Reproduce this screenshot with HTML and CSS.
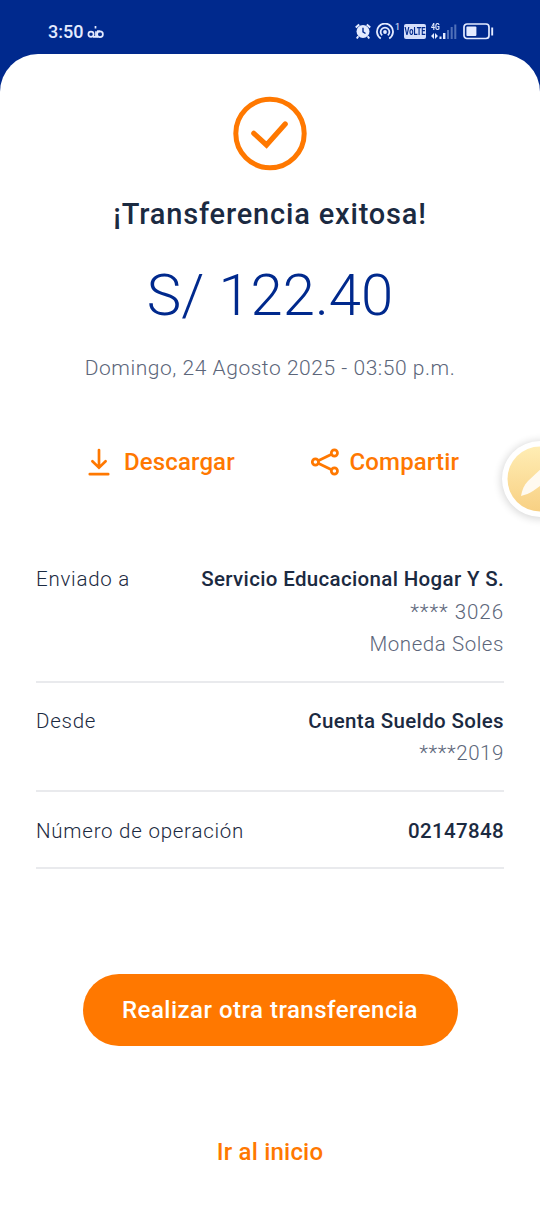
FILE: index.html
```html
<!DOCTYPE html>
<html lang="es">
<head>
<meta charset="utf-8">
<title>Transferencia exitosa</title>
<link rel="stylesheet" href="styles.css">
</head>
<body>
<header class="status">
  <div class="status-left">
    <span class="clock">3:50</span>
    <svg class="glyph" width="18" height="14" viewBox="0 0 18 14" fill="none" stroke="#e4ebff" stroke-width="1.7"><circle cx="4" cy="9.2" r="2.6"/><circle cx="13" cy="9.2" r="2.9"/><path d="M6 11.9h5M9 11.5V6.2M8.5 1v2.5M10 6.1l3 .2"/></svg>
  </div>
  <div class="status-right">
    <svg width="16" height="17" viewBox="0 0 16 17"><circle cx="8" cy="8.5" r="6.5" fill="#e4ebff"/><path d="M.8 4.6 4.2 1.4M15.2 4.6 11.8 1.4M3.3 13.2 1.8 15.5M12.7 13.2l1.5 2.3" stroke="#e4ebff" stroke-width="2"/><path d="M8 4.8v4l2.5 1.7" fill="none" stroke="#00298d" stroke-width="1.4"/></svg>
    <svg class="hotspot" width="18" height="17" viewBox="0 0 18 17" fill="none" stroke="#e4ebff" stroke-width="1.8"><path d="M4.8 15.4A8 8 0 1 1 13.2 15.4M6.2 12.4a4.4 4.4 0 1 1 5.6 0"/><circle cx="9" cy="9" r="1.9" fill="#e4ebff" stroke="none"/></svg>
    <span class="one">1</span>
    <span class="volte"><span class="volte-text">VoLTE</span></span>
    <div class="signal">
      <span class="net">4G</span>
      <svg width="26" height="18" viewBox="0 0 26 18"><path d="M0 13 3 10v6zM7 13 4 10v6zM8.5 13.5h2v2.4h-2zM12 10h2.4v5.9H12z" fill="#e4ebff"/><path d="M16 7h2v8.9h-2zM19.7 4h2v11.9h-2zM23.3 1.4h2v14.5h-2z" fill="#5070b8"/></svg>
    </div>
    <svg class="battery" width="31" height="17" viewBox="0 0 31 17"><rect x="1" y="1" width="25" height="14.5" rx="3" fill="none" stroke="#e4ebff" stroke-width="1.7"/><rect x="3.4" y="3.5" width="10" height="9.5" rx="1" fill="#e4ebff"/><path d="M29.2 4.5v8" stroke="#e4ebff" stroke-width="1.9"/></svg>
  </div>
</header>
<main class="sheet">
  <svg class="check" width="76" height="76" viewBox="0 0 76 76" fill="none" stroke="#ff7800"><circle cx="38" cy="38.5" r="34.2" stroke-width="5"/><path d="M21.8 38.3 34.5 50 53.2 29" stroke-width="5.2" stroke-linecap="round"/></svg>
  <h1 class="title">¡Transferencia exitosa!</h1>
  <p class="amount">S/ 122.40</p>
  <p class="date">Domingo, 24 Agosto 2025 - 03:50 p.m.</p>
  <div class="actions">
    <a class="action"><svg width="22" height="28" viewBox="0 0 22 28" fill="none" stroke="#ff7800" stroke-width="2.7" stroke-linecap="round"><path d="M11 2v17M4.4 13.2 11 19.6l6.6-6.4M1.8 26.2h18.4"/></svg><span>Descargar</span></a>
    <a class="action"><svg width="28" height="28" viewBox="0 0 28 28" fill="none" stroke="#ff7800" stroke-width="2.7"><circle cx="4.4" cy="14" r="3.1"/><circle cx="23.4" cy="5" r="3.1"/><circle cx="23.4" cy="23" r="3.1"/><path d="m7.2 12.7 13.4-6.4M7.2 15.3l13.4 6.4"/></svg><span>Compartir</span></a>
  </div>
  <section class="details">
    <div class="row">
      <span class="label">Enviado a</span>
      <div class="values"><b class="name">Servicio Educacional Hogar Y S.</b><span class="masked">**** 3026</span><span class="currency">Moneda Soles</span></div>
    </div>
    <div class="row">
      <span class="label">Desde</span>
      <div class="values"><b class="name">Cuenta Sueldo Soles</b><span class="currency">****2019</span></div>
    </div>
    <div class="row">
      <span class="label">Número de operación</span>
      <div class="values"><b class="name">02147848</b></div>
    </div>
  </section>
  <button class="primary">Realizar otra transferencia</button>
  <a class="home">Ir al inicio</a>
</main>
<div class="edge">
  <svg width="52" height="100" viewBox="0 0 52 100"><defs><linearGradient id="g" x1="0" y1="0" x2="0" y2="1"><stop offset="0" stop-color="#ffedb4"/><stop offset="1" stop-color="#f8d083"/></linearGradient><filter id="s" x="-20%" y="-20%" width="140%" height="140%"><feGaussianBlur stdDeviation="4"/></filter></defs><circle cx="52" cy="50" r="39" fill="#000" opacity=".16" filter="url(#s)"/><circle cx="52" cy="49" r="38" fill="#fff"/><circle cx="52" cy="49" r="32.5" fill="url(#g)"/><path d="M33 66C34 60 36 55 40 51L55 37V54L45 61C42 63 37 65 33 66Z" fill="#fffaf0"/></svg>
</div>
</body>
</html>
```
FILE: styles.css
```css
* { box-sizing: border-box; }
body { margin: 0; width: 540px; height: 1206px; overflow: hidden; position: relative; background: #00298d; font-family: Roboto, "Noto Sans", sans-serif; color: #1b2a41; }
p, h1 { margin: 0; }
svg { display: block; flex: none; }
.status { height: 54px; padding: 22px 46px 0 48px; display: flex; justify-content: space-between; color: #e4ebff; }
.status-left { display: flex; height: 19px; align-items: center; gap: 4px; }
.clock { font-size: 18px; font-weight: 500; }
.glyph { margin-top: 1px; }
.status-right { display: flex; height: 19px; align-items: center; }
.hotspot { margin-left: 5px; }
.one { font-size: 9px; line-height: 10px; align-self: flex-start; margin: 0 4px 0 1px; }
.volte { width: 22px; height: 15px; border-radius: 2px; background: #d5defa; color: #00298d; display: flex; justify-content: center; }
.volte-text { font: 700 10px/15px Roboto, sans-serif; transform: scaleX(.75); }
.signal { position: relative; margin-left: 5px; }
.net { position: absolute; left: 0; top: 0; font-size: 9px; line-height: 9px; font-weight: 700; transform: scaleX(.78); transform-origin: left; }
.battery { margin-left: 6px; }
.sheet { height: 1152px; background: #fff; border-radius: 38px 38px 0 0; padding: 41px 36px 0; display: flex; flex-direction: column; align-items: center; }
.title { margin-top: 23px; font-size: 29px; line-height: 40px; font-weight: 500; letter-spacing: .82px; white-space: nowrap; }
.amount { margin-top: 26px; font-size: 58px; line-height: 70px; font-weight: 300; color: #00298d; white-space: nowrap; }
.date { margin-top: 23px; font-size: 21px; line-height: 30px; font-weight: 300; color: #5c667a; white-space: nowrap; letter-spacing: .53px; }
.actions { margin-top: 59px; width: 100%; height: 40px; padding: 0 45px 0 52px; display: flex; justify-content: space-between; }
.action { display: flex; align-items: center; gap: 14px; color: #ff7800; font-size: 24px; font-weight: 500; line-height: 40px; letter-spacing: .13px; white-space: nowrap; }
.action + .action { gap: 11px; }
.details { width: 100%; margin-top: 58px; }
.row { display: flex; justify-content: space-between; padding: 22px 0 20px; border-bottom: 2px solid #e9eaed; font-size: 20.5px; line-height: 32.5px; white-space: nowrap; }
.row:first-child { padding-top: 23px; }
.row:last-child { padding-top: 23px; }
.label { font-weight: 300; letter-spacing: .76px; }
.values { display: flex; flex-direction: column; align-items: flex-end; font-weight: 300; color: #5c667a; }
.name { font-weight: 500; color: #1b2a41; letter-spacing: .34px; }
.masked { letter-spacing: .95px; }
.currency { letter-spacing: .57px; }
.primary { margin-top: 105px; width: 375px; height: 72px; flex: none; border: 0; border-radius: 36px; background: #ff7800; color: #fff; font: 500 24px/72px Roboto, sans-serif; letter-spacing: .48px; padding: 0; white-space: nowrap; }
.home { margin-top: 86px; font-size: 24px; line-height: 40px; font-weight: 500; letter-spacing: .2px; color: #ff7800; white-space: nowrap; }
.edge { position: absolute; right: 0; top: 430px; width: 52px; height: 100px; overflow: hidden; }
```
